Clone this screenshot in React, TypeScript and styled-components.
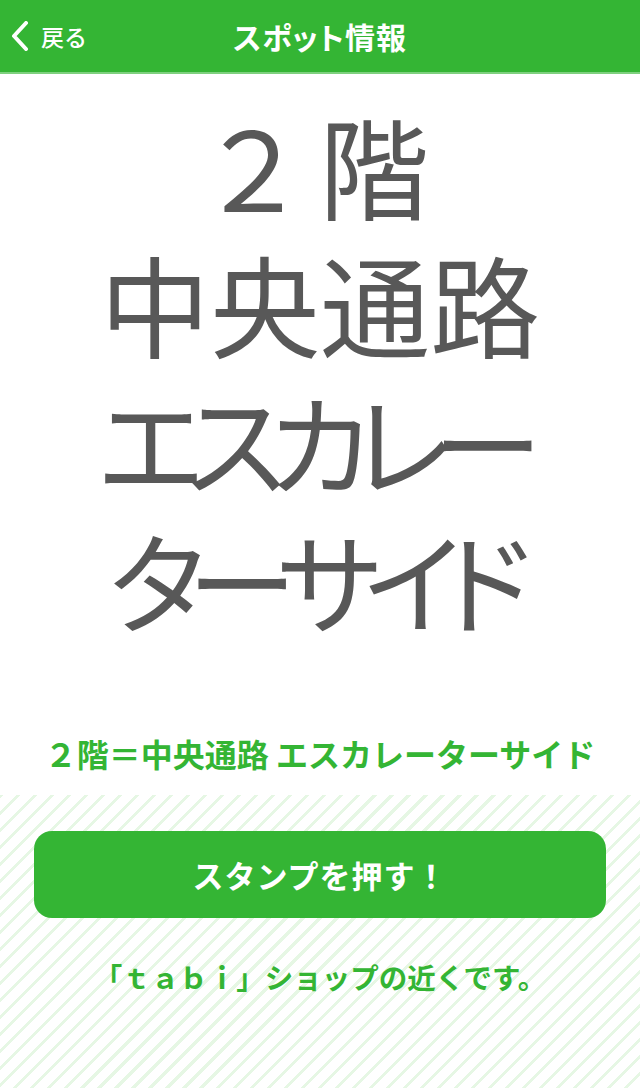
import styled, { createGlobalStyle } from 'styled-components'

const green = '#34b534'

const GlobalStyle = createGlobalStyle`
  html, body {
    margin: 0;
    padding: 0;
    background: #fff;
  }
  body {
    font-family: "Noto Sans CJK JP", "Noto Sans", sans-serif;
  }
`

const Page = styled.div`
  width: 640px;
  min-height: 1088px;
  display: flex;
  flex-direction: column;
`

const Header = styled.header`
  height: 74px;
  background: ${green};
  border-bottom: 2px solid #7fd07f;
  box-sizing: border-box;
  display: grid;
  grid-template-columns: 1fr auto 1fr;
  align-items: center;
  color: #fff;
`

const Back = styled.div`
  display: flex;
  align-items: center;
  gap: 11px;
  padding-left: 10px;
  font-size: 23px;
  font-weight: 500;
`

const Title = styled.h1`
  margin: 0;
  font-size: 30px;
  font-weight: 700;
  font-feature-settings: 'palt';
  letter-spacing: 1px;
`

const Sign = styled.div`
  padding: 35px 0 0;
  display: flex;
  flex-direction: column;
  align-items: center;
  gap: 28px;
  color: #585858;
  font-size: 110px;
  font-weight: 400;
  line-height: 110px;
  font-feature-settings: 'palt';
`

const SignLine = styled.div<{ $tight?: boolean }>`
  white-space: nowrap;
  letter-spacing: ${({ $tight }) => ($tight ? '-17px' : '0')};
  margin-right: ${({ $tight }) => ($tight ? '17px' : '0')};
`

const Caption = styled.p`
  margin: 100px 0 0;
  text-align: center;
  color: ${green};
  font-size: 32px;
  font-weight: 700;
  line-height: 40px;
`

const Lower = styled.section`
  flex: 1;
  margin-top: 22px;
  padding: 36px 34px 0;
  background: repeating-linear-gradient(
    -45deg,
    #fff 0 9px,
    #e6f7e4 9px 12px
  );
  display: flex;
  flex-direction: column;
  align-items: stretch;
`

const StampButton = styled.button`
  height: 87px;
  border: none;
  border-radius: 18px;
  background: ${green};
  color: #fff;
  font-family: inherit;
  font-size: 31px;
  font-weight: 700;
  letter-spacing: 1px;
  cursor: pointer;
`

const Note = styled.p`
  margin: 39px 0 0;
  text-align: center;
  color: ${green};
  font-size: 28.5px;
  font-weight: 700;
  line-height: 40px;
`

const Chevron = () => (
  <svg width="20" height="30" viewBox="0 0 20 30">
    <path d="M16 2 L4 15 L16 28" fill="none" stroke="#fff" strokeWidth="4" strokeLinecap="round" strokeLinejoin="round" />
  </svg>
)

export default function App() {
  return (
    <>
      <GlobalStyle />
      <Page>
        <Header>
          <Back>
            <Chevron />
            戻る
          </Back>
          <Title>スポット情報</Title>
          <span />
        </Header>
        <Sign>
          <SignLine>２ 階</SignLine>
          <SignLine>中央通路</SignLine>
          <SignLine $tight>エスカレー</SignLine>
          <SignLine $tight>ターサイド</SignLine>
        </Sign>
        <Caption>２階＝中央通路 エスカレーターサイド</Caption>
        <Lower>
          <StampButton>スタンプを押す！</StampButton>
          <Note>「ｔａｂｉ」ショップの近くです。</Note>
        </Lower>
      </Page>
    </>
  )
}
